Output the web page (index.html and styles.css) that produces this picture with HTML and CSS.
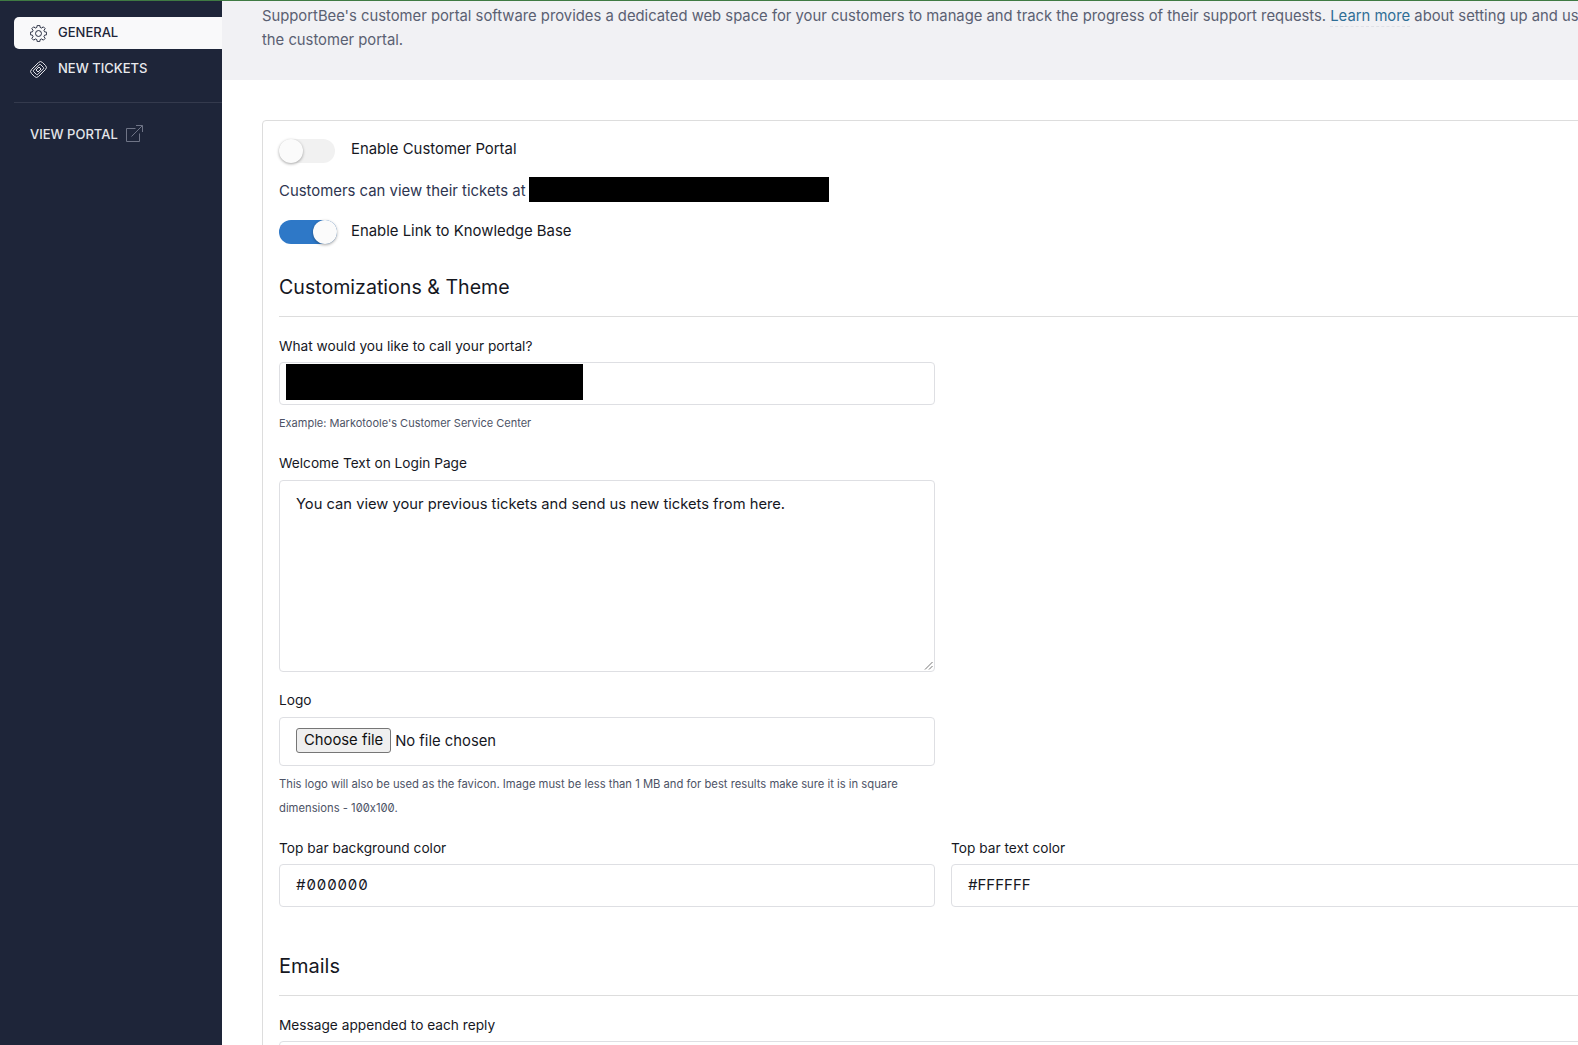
FILE: index.html
```html
<!DOCTYPE html>
<html lang="en">
<head>
<meta charset="utf-8">
<title>Customer Portal</title>
<link rel="stylesheet" href="styles.css">
</head>
<body>
<div class="app">
  <aside class="sidebar">
    <nav class="nav">
      <a class="nav-item active">
        <svg class="nav-icon" viewBox="0.5 2 23 23" fill="none" stroke="currentColor" stroke-width="1.300" stroke-linejoin="round"><path d="M10.300 2.500h3.400l.6 2.800 1.900.8 2.400-1.600 2.400 2.400-1.600 2.400.8 1.900 2.800.6v3.400l-2.800.6-.8 1.900 1.600 2.400-2.400 2.400-2.400-1.600-1.900.8-.6 2.800h-3.400l-.6-2.800-1.900-.8-2.400 1.600-2.400-2.400 1.600-2.400-.8-1.900-2.800-.6v-3.400l2.800-.6.8-1.900-1.600-2.400 2.400-2.400 2.400 1.600 1.900-.8z"/><circle cx="12" cy="13.500" r="4"/></svg>
        <span class="nav-text">GENERAL</span>
      </a>
      <a class="nav-item">
        <svg class="nav-icon" viewBox="0 0 24 24" fill="none" stroke="currentColor" stroke-width="1.300" stroke-linejoin="round"><g transform="rotate(45 12 12)"><rect x="5" y="1" width="14" height="22" rx="4"/><rect x="7.800" y="5" width="8.400" height="14" rx="1.500"/><rect x="10" y="9" width="4" height="6"/></g></svg>
        <span class="nav-text">NEW TICKETS</span>
      </a>
    </nav>
    <div class="nav-divider"></div>
    <a class="view-portal">
      <span>VIEW PORTAL</span>
      <svg class="ext-icon" viewBox="0 0 17 17" fill="none" stroke="currentColor" stroke-width="1"><path d="M9.500 3.500H.5v13h13v-8"/><path d="M5.500 11.500 16.200.8M10 .5h6.500V7"/></svg>
    </a>
  </aside>
  <main class="main">
    <header class="intro">
      <p class="intro-text">SupportBee's customer portal software provides a dedicated web space for your customers to manage and track the progress of their support requests. <a class="learn">Learn more</a> about setting up and using the customer portal.</p>
    </header>
    <section class="card">
      <div class="toggle-row first">
        <span class="toggle off"><span class="knob"></span></span>
        <span class="toggle-label">Enable Customer Portal</span>
      </div>
      <div class="url-row">
        <span class="url-text">Customers can view their tickets at</span>
        <span class="redact url-redact"></span>
      </div>
      <div class="toggle-row second">
        <span class="toggle on"><span class="knob"></span></span>
        <span class="toggle-label">Enable Link to Knowledge Base</span>
      </div>

      <h2 class="section-title">Customizations &amp; Theme</h2>

      <div class="field name-field">
        <label class="label">What would you like to call your portal?</label>
        <div class="input half name-input"><span class="redact name-redact"></span></div>
        <p class="hint">Example: Markotoole's Customer Service Center</p>
      </div>

      <div class="field welcome-field">
        <label class="label">Welcome Text on Login Page</label>
        <div class="textarea half">You can view your previous tickets and send us new tickets from here.
          <svg class="grip" viewBox="0 0 9 9" stroke="#777" fill="none"><path d="M1 8.500 8.500 1M5 8.500 8.500 5"/></svg>
        </div>
      </div>

      <div class="field logo-field">
        <label class="label">Logo</label>
        <div class="input half file-input"><span class="file-btn">Choose file</span><span class="file-name">No file chosen</span></div>
        <p class="hint logo-hint">This logo will also be used as the favicon. Image must be less than 1 MB and for best results make sure it is in square dimensions - 100x100.</p>
      </div>

      <div class="color-row">
        <div class="color-col">
          <label class="label">Top bar background color</label>
          <div class="input value zeros">#000000</div>
        </div>
        <div class="color-col">
          <label class="label">Top bar text color</label>
          <div class="input value">#FFFFFF</div>
        </div>
      </div>

      <h2 class="section-title emails">Emails</h2>

      <div class="field reply-field">
        <label class="label">Message appended to each reply</label>
        <div class="input wide"></div>
      </div>
    </section>
  </main>
</div>
</body>
</html>
```

FILE: styles.css
```css
* { box-sizing: border-box; }
html, body { margin: 0; height: 100%; overflow: hidden; background: #fff; }
body {
  font-family: Inter, "Liberation Sans", sans-serif;
  font-feature-settings: "zero" 1, "calt" 0;
  color: #16181f;
  border-top: 1px solid #3f7a43;
}
.app { display: flex; width: 1578px; height: 1044px; overflow: hidden; }

.sidebar { flex: 0 0 222px; background: #1e2539; padding-top: 16px; }
.nav { display: flex; flex-direction: column; }
.nav-item {
  display: flex; align-items: center; gap: 11px;
  margin-left: 14px; height: 32px; padding-left: 16px;
  font-size: 13px; font-weight: 500; color: #e9eaee;
}
.nav-text { position: relative; top: -1px; }
.nav-item + .nav-item { margin-top: 4px; }
.nav-item.active { background: #f9f9fa; color: #1e2539; border-radius: 5px 0 0 5px; }
.nav-icon { width: 17px; height: 17px; flex: none; }
.nav-divider { height: 1px; background: #343a4d; margin: 17px 0 0 14px; }
.view-portal {
  display: flex; align-items: center; gap: 8px;
  margin: 22px 0 0 30px;
  font-size: 13px; font-weight: 500; color: #e4e5ea;
}
.ext-icon { width: 17px; height: 17px; color: #6f7486; }

.main { flex: 1; min-width: 0; }
.intro { background: #f1f1f4; height: 79px; padding: 3px 0 0 40px; }
.intro-text { margin: 0; width: 1340px; font-size: 14.800px; line-height: 24px; color: #5a6072; }
.learn { color: #2f6e96; border-bottom: 1px dashed #dfe0e5; padding-bottom: 1px; }

.card {
  margin: 40px 0 0 40px; width: 1400px; height: 1000px;
  border: 1px solid #dddddd; border-radius: 4px 0 0 0;
  padding: 18px 16px 0;
}
.toggle-row { display: flex; align-items: center; gap: 14px; height: 24px; margin-top: 18px; }
.toggle-row.first { margin-top: 0; }
.toggle {
  display: block; width: 58px; height: 24px; border-radius: 12px;
  background: #f1f1f1; position: relative; flex: none;
}
.toggle.off { width: 56px; margin-right: 2px; }
.toggle.on { background: #2e78c7; }
.knob {
  position: absolute; left: 0; top: 0; width: 24px; height: 24px; border-radius: 50%;
  background: #fbfbfb; box-shadow: 0 1px 3px rgba(0,0,0,.35);
}
.toggle.on .knob { left: 34px; }
.toggle-label { font-size: 14.900px; position: relative; top: -2px; }
.second .toggle-label { top: -1px; }
.url-row { display: flex; align-items: center; gap: 3px; margin-top: 14px; height: 25px; font-size: 14.900px; color: #2e3550; }
.url-text { position: relative; top: 1px; }
.redact { display: block; background: #000; flex: none; }
.url-redact { width: 300px; height: 25px; }

.section-title { margin: 0; font-size: 19.600px; font-weight: 400; line-height: 28px; padding: 29px 0 14px; border-bottom: 1px solid #dddddd; height: 73px; color: #16181f; }
.section-title.emails { padding-top: 45px; height: 89px; font-size: 20px; }

.field { display: block; }
.name-field { margin-top: 19px; }
.welcome-field { margin-top: 22px; }
.welcome-field .label { margin-bottom: 7px; }
.logo-field { margin-top: 18px; }
.logo-field .label { margin-bottom: 7px; }
.reply-field { margin-top: 19px; }
.label { display: block; font-size: 13.700px; line-height: 20px; color: #16181f; margin-bottom: 6px; }
.input { display: flex; align-items: center; height: 43px; border: 1px solid #dedfe3; border-radius: 4px; background: #fff; }
.half { width: 656px; }
.name-input { padding-left: 6px; }
.name-redact { width: 297px; height: 36px; margin-bottom: 4px; }
.hint { margin: 0; font-size: 11px; color: #4d5366; }
.name-field .hint { margin-top: 10px; line-height: 16px; }
.textarea {
  position: relative; height: 192px; border: 1px solid #dedfe3; border-radius: 4px;
  padding: 12px 16px; font-size: 14.730px; line-height: 22px; color: #16181f;
}
.grip { position: absolute; right: 1px; bottom: 1px; width: 9px; height: 9px; }
.file-input { height: 49px; padding: 0 16px; gap: 4px; font-size: 14.800px; }
.file-btn {
  display: block; height: 25px; line-height: 23px; padding: 0 7px;
  border: 1px solid #767676; border-radius: 3px; background: #efefef; color: #111;
  position: relative; top: -1px;
}
.file-name { position: relative; top: -1px; }
.logo-hint { width: 656px; margin-top: 6px; line-height: 24px; font-size: 11.240px; }
.color-row { display: flex; gap: 16px; margin-top: 18px; }
.color-col { flex: 0 0 656px; }
.value { padding: 0 0 2px 16px; font-size: 15px; }
.zeros { letter-spacing: .9px; }
.wide { width: 1320px; }
```
